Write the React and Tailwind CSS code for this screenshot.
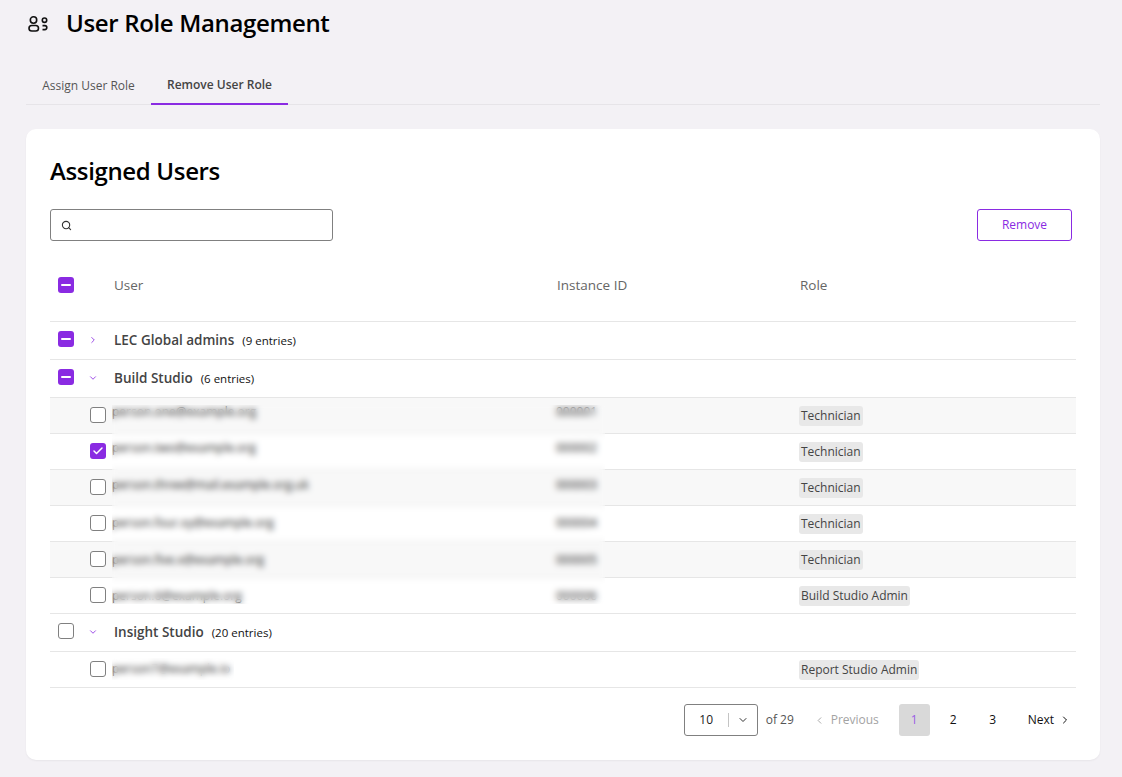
import { Check, ChevronDown, ChevronLeft, ChevronRight, Search } from 'lucide-react';

const buildRows = [
  { user: 'person.one@example.org', id: '000001', role: 'Technician', shift: '-translate-y-1', striped: true },
  { user: 'person.two@example.org', id: '000002', role: 'Technician', shift: '-translate-y-1', checked: true },
  { user: 'person.three@mail.example.org.uk', id: '000003', role: 'Technician', shift: '-translate-y-[3px]', striped: true },
  { user: 'person.four.xy@example.org', id: '000004', role: 'Technician', shift: '-translate-y-px' },
  { user: 'person.five.x@example.org', id: '000005', role: 'Technician', shift: 'translate-y-0', striped: true },
  { user: 'person.6@example.org', id: '000006', role: 'Build Studio Admin', shift: 'translate-y-0' },
];

const CheckBox = ({ state }) => {
  if (state === 'some') {
    return (
      <span className="flex h-4 w-4 items-center justify-center rounded-[3px] bg-[#8a2be2]">
        <span className="h-[2px] w-[10px] rounded-full bg-white" />
      </span>
    );
  }
  if (state === 'on') {
    return (
      <span className="flex h-4 w-4 items-center justify-center rounded-[3px] bg-[#8a2be2]">
        <Check size={12} strokeWidth={3} className="text-white" />
      </span>
    );
  }
  return <span className="block h-4 w-4 rounded-[3px] border border-[#808080] bg-white" />;
};

const RoleChip = ({ children }) => (
  <span className="inline-flex h-5 items-center rounded-[3px] bg-[#e8e8e8] px-[2px] text-xs text-[#444]">{children}</span>
);

const GroupRow = ({ state, open, name, entries }) => (
  <div className="grid h-[38px] grid-cols-[32px_32px_1fr] items-center border-b border-[#e6e6e6]">
    <span className="-mt-[3px] pl-2">
      <CheckBox state={state} />
    </span>
    <span className="-mt-px pl-[6px]">
      {open ? (
        <ChevronDown size={10} className="text-[#8a2be2]" />
      ) : (
        <ChevronRight size={10} className="text-[#8a2be2]" />
      )}
    </span>
    <p className="flex items-baseline">
      <span className="text-[13.5px] font-semibold text-[#444]">{name}</span>
      <span className="ml-2 text-[11.5px] text-[#111]">({entries} entries)</span>
    </p>
  </div>
);

const UserRow = ({ row }) => (
  <div className={`grid h-9 grid-cols-[64px_443px_243px_1fr] items-center border-b border-[#e6e6e6] ${row.striped ? 'bg-[#f8f8f8]' : 'bg-white'}`}>
    <span className="-mt-px pl-10">
      <CheckBox state={row.checked ? 'on' : 'off'} />
    </span>
    <span className={`-ml-0.5 text-xs text-[#222] ${row.shift}`}>{row.user}</span>
    <span className={`-ml-px text-xs text-[#222] ${row.shift}`}>{row.id}</span>
    <span className="-ml-px -mt-[3px]">
      <RoleChip>{row.role}</RoleChip>
    </span>
  </div>
);

const App = () => {
  return (
    <div className="h-[777px] overflow-hidden bg-[#f3f1f5] pl-[26px] pr-[22px] font-['Open_Sans',sans-serif]">
      <header className="flex h-[46px] items-center pl-[2px]">
        <svg width="20" height="16" viewBox="0 0 20 16" fill="none" stroke="#111" strokeWidth="1.6" className="mt-[1px]">
          <circle cx="5.5" cy="4" r="3.2" />
          <rect x="1" y="9.5" width="9.5" height="5.5" rx="2.75" />
          <circle cx="16.5" cy="4.2" r="2.2" />
          <path d="M14.5 9.6h2.3a2 2 0 0 1 0 4h-2.3" />
        </svg>
        <h1 className="ml-[18px] text-2xl font-semibold tracking-[-0.35px] text-black">User Role Management</h1>
      </header>

      <nav className="mt-5 flex h-[39px] border-b border-[#e6e4e8]">
        <button className="w-[125px] pt-0.5 text-xs text-[#555]">Assign User Role</button>
        <button className="h-[39px] w-[137px] border-b-2 border-[#8a2be2] text-xs font-semibold text-[#444]">Remove User Role</button>
      </nav>

      <section className="mt-6 h-[631px] rounded-[10px] bg-white pl-6 pr-6 pt-6 shadow-[0_1px_2px_rgba(0,0,0,0.05)]">
        <h2 className="text-2xl font-semibold leading-9 tracking-[-0.35px] text-black">Assigned Users</h2>

        <div className="mt-[20px] flex items-center justify-between pr-1">
          <label className="flex h-8 w-[283px] items-center rounded-[3px] border border-[#808080] pl-[10px]">
            <Search size={11} strokeWidth={2.4} className="text-[#333]" />
            <input className="ml-1 min-w-0 flex-1 outline-none" />
          </label>
          <button className="h-8 w-[95px] rounded-[3px] border border-[#8a2be2] text-xs text-[#8a2be2]">Remove</button>
        </div>

        <div className="grid h-[81px] grid-cols-[64px_443px_243px_1fr] items-center border-b border-[#e6e6e6] pt-[8px] text-[13.5px] text-[#666]">
          <span className="pl-2">
            <CheckBox state="some" />
          </span>
          <span>User</span>
          <span>Instance ID</span>
          <span>Role</span>
        </div>

        <GroupRow state="some" name="LEC Global admins" entries={9} />
        <GroupRow state="some" open name="Build Studio" entries={6} />

        <div className="relative">
          {buildRows.map((row) => (
            <UserRow key={row.id} row={row} />
          ))}
          {/* same redaction band as the source: hides mails and ids, row lines too */}
          <div className="absolute left-[62px] top-[7px] h-[199px] w-[493px] backdrop-blur-[3px]" />
        </div>

        <GroupRow state="off" open name="Insight Studio" entries={20} />

        <div className="relative grid h-9 grid-cols-[64px_686px_1fr] items-center border-b border-[#e6e6e6]">
          <span className="-mt-px pl-10">
            <CheckBox state="off" />
          </span>
          <span className="-ml-0.5 -mt-px text-xs text-[#222]">person7@example.io</span>
          <span className="-ml-px -mt-[3px]">
            <RoleChip>Report Studio Admin</RoleChip>
          </span>
          <div className="absolute left-[62px] top-1.5 h-[22px] w-[122px] backdrop-blur-[3px]" />
        </div>

        <footer className="mt-4 flex h-8 items-center justify-end text-xs text-[#111]">
          <div className="flex h-8 w-[74px] items-center rounded-[3px] border border-[#808080]">
            <span className="w-[43px] text-center text-[#222]">10</span>
            <span className="h-[14px] w-px bg-[#c4c4c4]" />
            <ChevronDown size={12} className="ml-2 text-[#333]" />
          </div>
          <span className="ml-2 w-[51px] text-[#555]">of 29</span>
          <span className="flex w-[82px] items-center text-[#a3a3a3]">
            <ChevronLeft size={11} className="-ml-[3px] mr-[6px]" />
            Previous
          </span>
          <span className="flex h-8 w-[31px] items-center justify-center rounded-[3px] bg-[#d9d9d9] text-[#9b5de5]">1</span>
          <span className="w-[47px] text-center">2</span>
          <span className="w-[32px] text-center">3</span>
          <span className="ml-[19px] flex items-center">
            Next
            <ChevronRight size={12} className="ml-[5px]" />
          </span>
          <span className="w-[5px]" />
        </footer>
      </section>
    </div>
  );
};

export default App;
